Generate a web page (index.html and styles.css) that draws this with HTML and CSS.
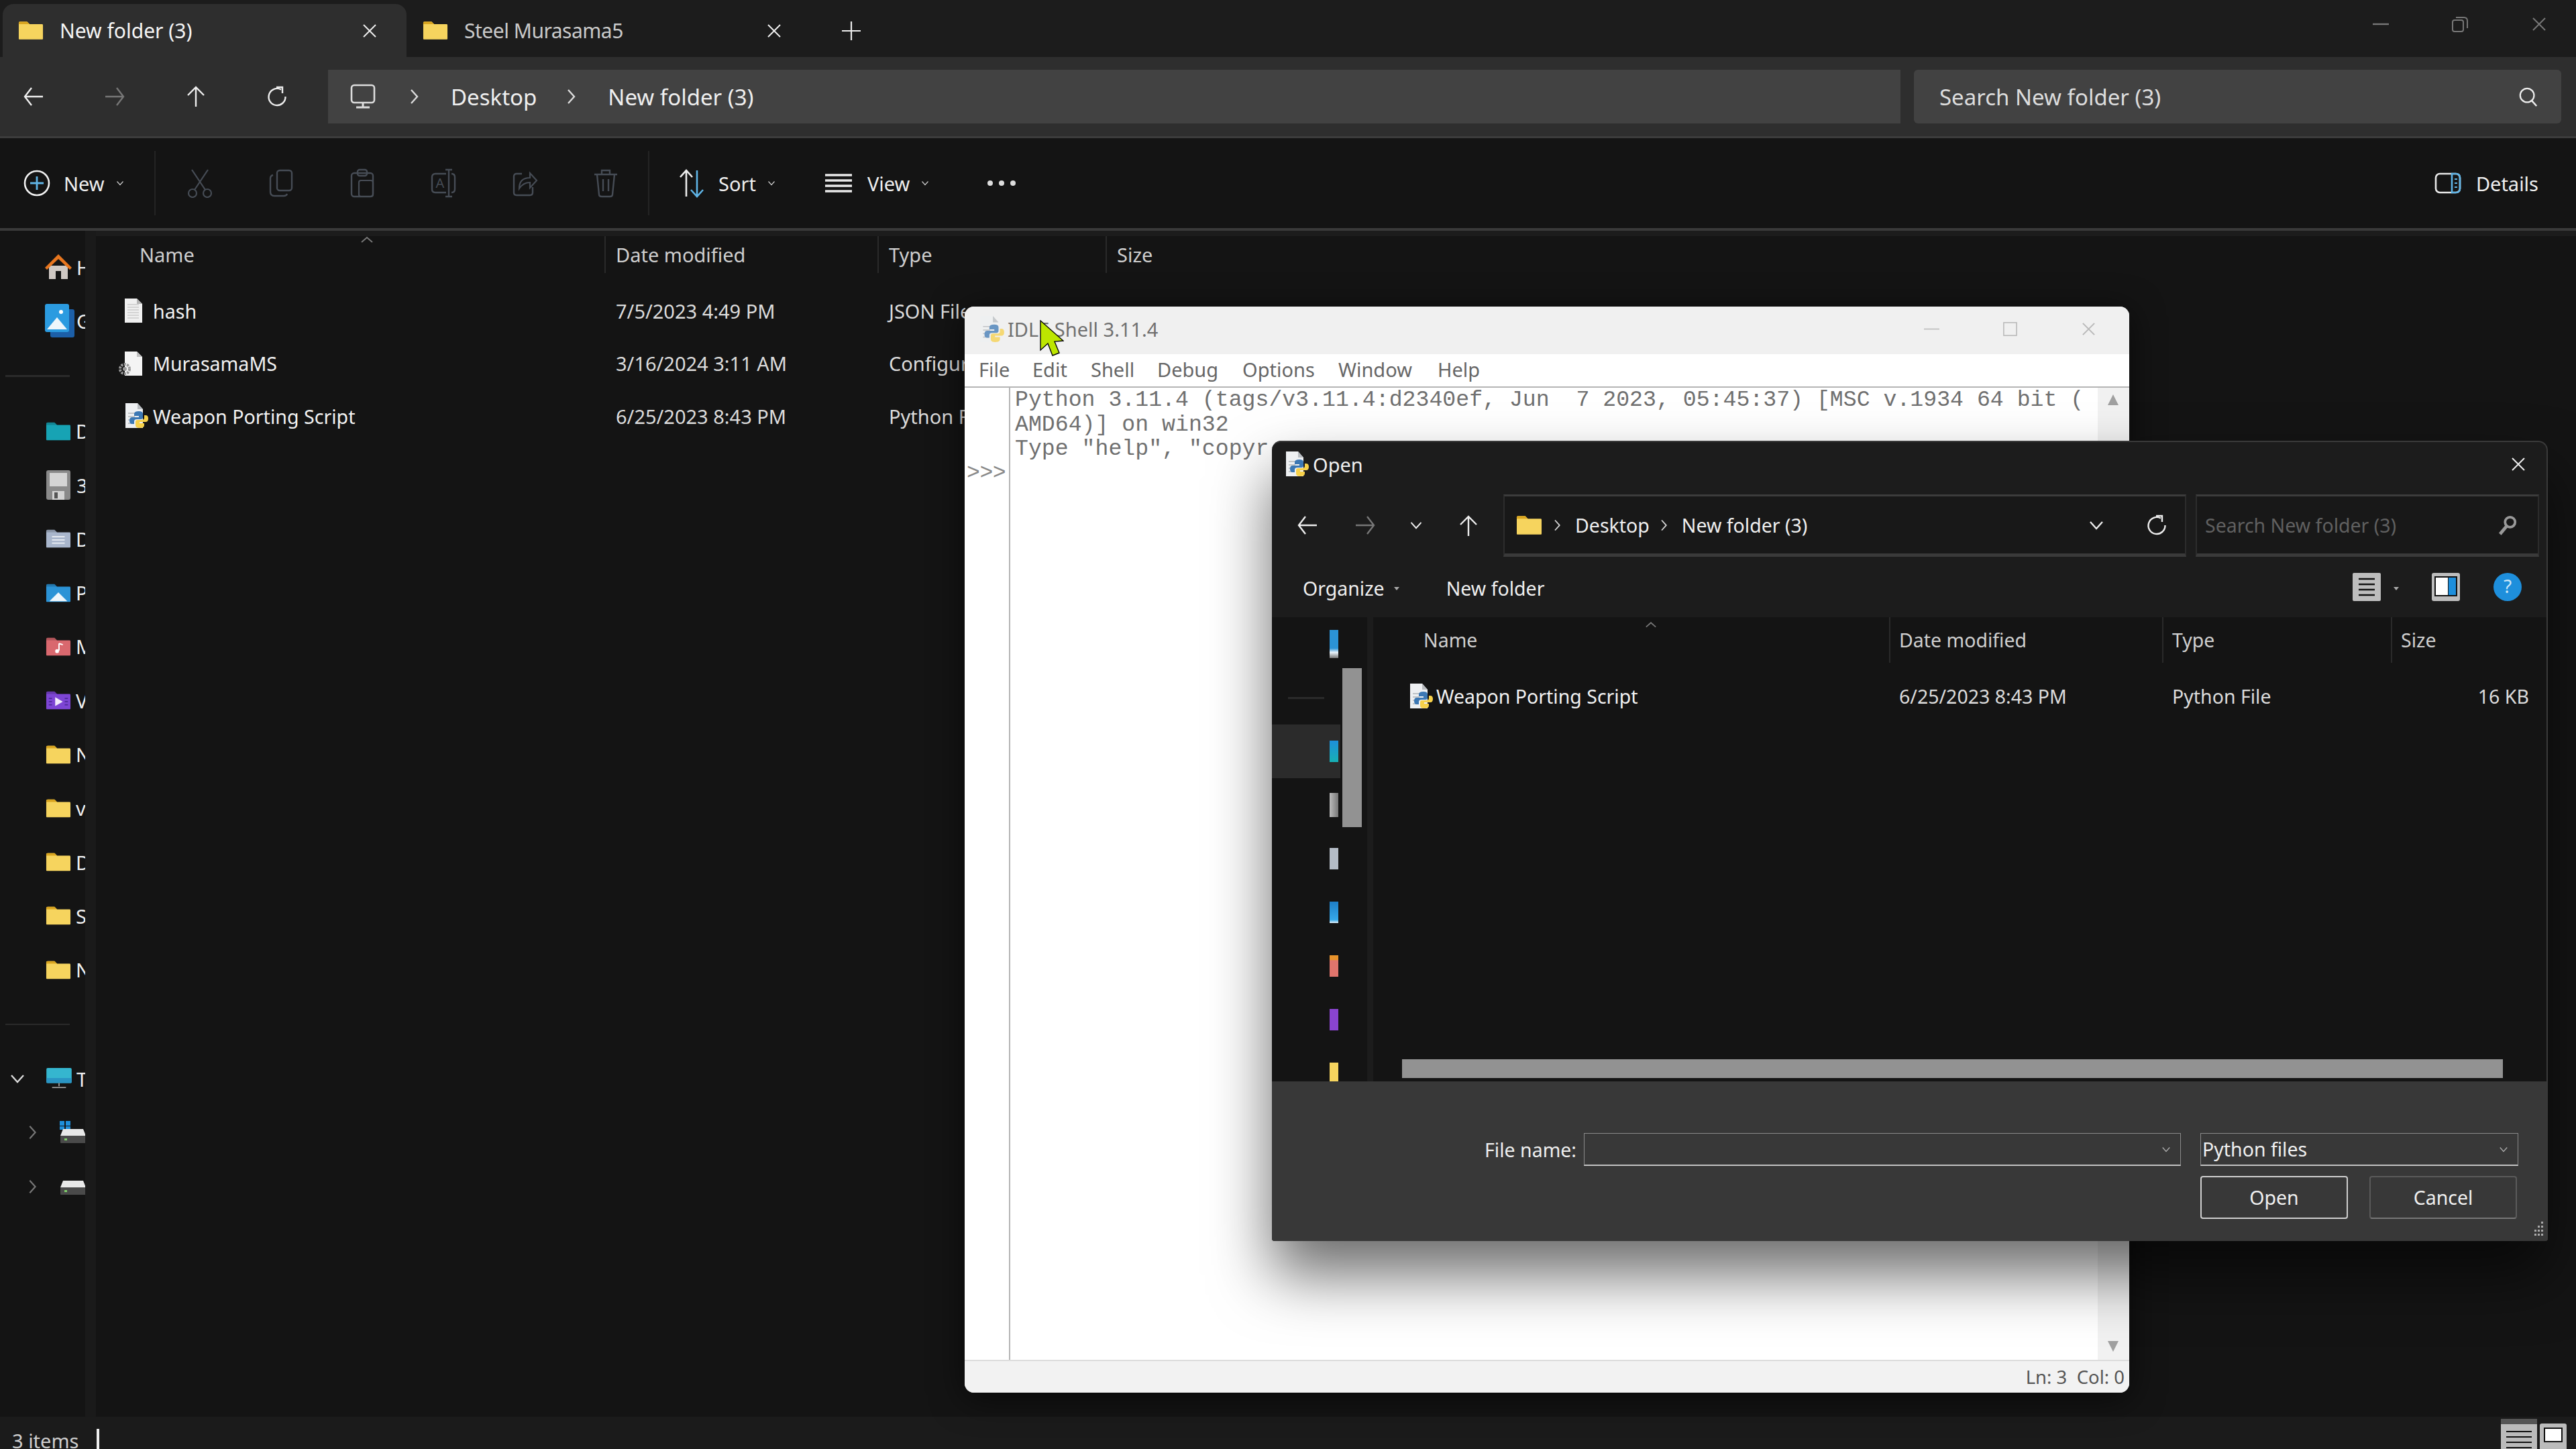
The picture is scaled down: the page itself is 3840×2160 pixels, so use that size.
FILE: index.html
```html
<!DOCTYPE html>
<html lang="en">
<head>
  <meta charset="UTF-8">
  <title>New folder (3) - File Explorer</title>
  <link rel="stylesheet" href="styles.css">
</head>
<body>
  <svg class="sprites" xmlns="http://www.w3.org/2000/svg">
    <symbol id="folder" viewBox="0 0 40 30"><path d="M1 3q0-2 2-2h11l4 4h20q1 0 1 2v21q0 1-1 1H2q-1 0-1-1z" fill="currentColor"/><path d="M1 3q0-2 2-2h11l4 4H1z" fill="#000" opacity=".18"/></symbol>
    <symbol id="folder-doc" viewBox="0 0 40 30"><use href="#folder"/><path d="M10 12h20M10 17h20M10 22h20" stroke="#eef1f5" stroke-width="2"/></symbol>
    <symbol id="folder-pic" viewBox="0 0 40 30"><use href="#folder"/><path d="M6 28l14-14 14 14z" fill="#eef6fb"/></symbol>
    <symbol id="folder-music" viewBox="0 0 40 30"><use href="#folder"/><path d="M21 10v11" stroke="#fff" stroke-width="2"/><path d="M21 10l6 2" stroke="#fff" stroke-width="2"/><circle cx="18" cy="22" r="3" fill="#fff"/></symbol>
    <symbol id="folder-video" viewBox="0 0 40 30"><use href="#folder"/><path d="M15 10l12 7-12 7z" fill="#f2ecfb"/><path d="M5 12h5M5 17h5M5 22h5M30 12h5M30 17h5M30 22h5" stroke="#4c2a96" stroke-width="2"/></symbol>
    <symbol id="yfolder" viewBox="0 0 40 30"><path d="M1 3q0-2 2-2h11l4 4h20q1 0 1 2v21q0 1-1 1H2q-1 0-1-1z" fill="#f6d45e"/><path d="M1 3q0-2 2-2h11l4 4H1z" fill="#d9a520"/></symbol>
    <symbol id="pyfile" viewBox="0 0 36 40"><path d="M2 1h18l8 9v28H2z" fill="#eef0f2"/><path d="M20 1v9h8z" fill="#b8bcc0"/><path d="M6 16h16M6 21h10M6 26h8M6 31h8" stroke="#b0b4b8" stroke-width="1.5"/><path d="M22 13q-7 0-7 4v3h7v2h-10q-4 0-4 5t4 5h3v-4q0-3 4-3h6q3 0 3-3v-5q0-4-6-4z" fill="#3c78b4"/><path d="M23 38q7 0 7-4v-3h-7v-2h9q4 0 4-5t-4-5h-2v4q0 3-4 3h-6q-3 0-3 3v5q0 4 6 4z" fill="#f7d14a"/></symbol>
    <symbol id="page" viewBox="0 0 28 38"><path d="M1 1h18l8 8v28H1z" fill="#f0f0f0"/><path d="M19 1v8h8z" fill="#b4b4b4"/><path d="M5 10h17M5 14h17M5 18h17M5 22h17M5 26h17M5 30h17" stroke="#b8b8b8" stroke-width="1"/></symbol>
    <symbol id="cfgfile" viewBox="0 0 36 38"><path d="M9 1h18l8 8v28H9z" fill="#f4f4f4"/><path d="M27 1v8h8z" fill="#c0c0c0"/><circle cx="9" cy="27" r="7" fill="none" stroke="#999" stroke-width="4" stroke-dasharray="3 1.5"/><circle cx="9" cy="27" r="3" fill="#999"/></symbol>
    <symbol id="arrow-left" viewBox="0 0 32 32"><path d="M30 16H3M13 3L3 16l10 13" fill="none" stroke="currentColor" stroke-width="2.4"/></symbol>
    <symbol id="arrow-right" viewBox="0 0 32 32"><path d="M2 16h27M19 3l10 13-10 13" fill="none" stroke="currentColor" stroke-width="2.4"/></symbol>
    <symbol id="arrow-up" viewBox="0 0 32 32"><path d="M16 31V3M4 14L16 2l12 12" fill="none" stroke="currentColor" stroke-width="2.4"/></symbol>
    <symbol id="refresh" viewBox="0 0 32 32"><path d="M22 5.5A12.5 12.5 0 1 0 28.5 16" fill="none" stroke="currentColor" stroke-width="2.4"/><path d="M15 2h9v9" fill="none" stroke="currentColor" stroke-width="2.4"/></symbol>
    <symbol id="chev-r" viewBox="0 0 16 24"><path d="M4 2l9 10-9 10" fill="none" stroke="currentColor" stroke-width="2.4"/></symbol>
    <symbol id="chev-d" viewBox="0 0 24 16"><path d="M3 3l9 10 9-10" fill="none" stroke="currentColor" stroke-width="2.4"/></symbol>
    <symbol id="close" viewBox="0 0 24 24"><path d="M3 3l18 18M21 3L3 21" fill="none" stroke="currentColor" stroke-width="2"/></symbol>
    <symbol id="search" viewBox="0 0 32 32"><circle cx="14" cy="14" r="11" fill="none" stroke="currentColor" stroke-width="2.4"/><path d="M21 22l8 9" stroke="currentColor" stroke-width="2.6"/></symbol>
    <symbol id="monitor" viewBox="0 0 38 38"><rect x="2" y="2" width="34" height="26" rx="4" fill="none" stroke="currentColor" stroke-width="2.6"/><path d="M19 28v6M9 35h20" stroke="currentColor" stroke-width="3"/></symbol>
    <symbol id="plus" viewBox="0 0 40 40"><circle cx="20" cy="20" r="18" fill="none" stroke="#f0f0f0" stroke-width="2.6"/><path d="M20 10v20M10 20h20" stroke="#5fb4e6" stroke-width="2.8"/></symbol>
    <symbol id="cut" viewBox="0 0 40 44"><path d="M8 2l20 30M32 2L12 32" stroke="currentColor" stroke-width="2.2" fill="none"/><circle cx="9" cy="37" r="6" fill="none" stroke="currentColor" stroke-width="2.2"/><circle cx="31" cy="37" r="6" fill="none" stroke="currentColor" stroke-width="2.2"/></symbol>
    <symbol id="copy" viewBox="0 0 40 44"><rect x="14" y="3" width="22" height="30" rx="4" fill="none" stroke="currentColor" stroke-width="2.4"/><path d="M8 10q-4 1-4 5v20q0 6 6 6h14q4 0 5-3" fill="none" stroke="currentColor" stroke-width="2.4"/></symbol>
    <symbol id="paste" viewBox="0 0 40 44"><rect x="4" y="7" width="32" height="35" rx="4" fill="none" stroke="currentColor" stroke-width="2.4"/><rect x="13" y="2" width="14" height="9" rx="3" fill="none" stroke="currentColor" stroke-width="2.4"/><rect x="15" y="18" width="21" height="24" rx="3" fill="none" stroke="currentColor" stroke-width="2.2"/></symbol>
    <symbol id="rename" viewBox="0 0 40 44"><path d="M24 8H8q-5 0-5 5v18q0 5 5 5h16M32 8q5 0 5 5v18q0 5-5 5" fill="none" stroke="currentColor" stroke-width="2.4"/><path d="M28 3v38M23 2h10M23 42h10" fill="none" stroke="currentColor" stroke-width="2.4"/></symbol>
    <symbol id="share" viewBox="0 0 40 44"><path d="M16 8H8q-4 0-4 4v24q0 4 4 4h20q4 0 4-4v-8" fill="none" stroke="currentColor" stroke-width="2.4"/><path d="M12 30q0-16 16-16V7l10 11-10 11v-8q-10 0-16 9z" fill="none" stroke="currentColor" stroke-width="2.2"/></symbol>
    <symbol id="trash" viewBox="0 0 40 44"><path d="M3 9h34M14 9V3h12v6M7 9l3 30q0 3 4 3h12q4 0 4-3l3-30M16 16v18M24 16v18" fill="none" stroke="currentColor" stroke-width="2.4"/></symbol>
    <symbol id="sort" viewBox="0 0 40 44"><path d="M12 42V3M3 13l9-10 9 10" fill="none" stroke="#eee" stroke-width="2.6"/><path d="M28 3v39M19 32l9 10 9-10" fill="none" stroke="#5fb4e6" stroke-width="2.6"/></symbol>
    <symbol id="lines" viewBox="0 0 40 30"><path d="M0 3h40M0 11h40M0 19h40M0 27h40" stroke="#e8e8e8" stroke-width="3.6"/></symbol>
    <symbol id="details" viewBox="0 0 40 32"><rect x="2" y="2" width="36" height="28" rx="6" fill="none" stroke="#e8e8e8" stroke-width="2.6"/><path d="M26 2h6q6 0 6 6v16q0 6-6 6h-6z" fill="none" stroke="#5fb4e6" stroke-width="2.6"/><path d="M30 10h4M30 16h4M30 22h4" stroke="#5fb4e6" stroke-width="2.2"/></symbol>
    <symbol id="listview" viewBox="0 0 42 42"><rect width="42" height="42" rx="2" fill="#bdbdbd"/><path d="M9 9h24M9 17h24M9 25h24M9 33h24" stroke="#111" stroke-width="2.4"/></symbol>
    <symbol id="paneview" viewBox="0 0 42 42"><rect width="42" height="42" rx="3" fill="#bdbdbd"/><rect x="4" y="5" width="34" height="30" fill="#111"/><rect x="6" y="7" width="18" height="26" fill="#fff"/><rect x="25" y="7" width="11" height="26" fill="#1e8fdc"/></symbol>
    <symbol id="home" viewBox="0 0 40 40"><path d="M6 18h28v20H24V26h-8v12H6z" fill="#cfc9c4"/><path d="M0 21L20 1l20 20-3 3L20 8 3 24z" fill="#e8761e"/></symbol>
    <symbol id="gallery" viewBox="0 0 44 50"><rect x="8" y="8" width="36" height="42" rx="3" fill="#1c5fa8"/><rect width="36" height="42" rx="3" fill="#2b9be0"/><path d="M3 38l15-18 15 18z" fill="#eef6fb"/><circle cx="24" cy="12" r="3" fill="#fff"/></symbol>
    <symbol id="floppy" viewBox="0 0 36 44"><rect width="36" height="44" rx="3" fill="#8a8a8a"/><rect x="5" y="4" width="26" height="20" fill="#d4d4d4"/><rect x="9" y="31" width="18" height="13" fill="#d4d4d4"/><rect x="12" y="33" width="5" height="9" fill="#555"/></symbol>
    <symbol id="pc" viewBox="0 0 40 34"><rect width="40" height="24" rx="2" fill="#35b6cf"/><path d="M0 16h40v6q0 2-2 2H2q-2 0-2-2z" fill="#2a95c4"/><path d="M20 24v5M9 31h22" stroke="#999" stroke-width="2"/></symbol>
    <symbol id="drive" viewBox="0 0 40 26"><path d="M5 4h30l4 10H1z" fill="#e8e8e8"/><rect x="1" y="14" width="38" height="11" rx="1" fill="#4a4a4a"/><rect x="7" y="18" width="4" height="3" fill="#7ecf6a"/></symbol>
    <symbol id="windrive" viewBox="0 0 40 34"><rect x="0" y="0" width="7" height="7" fill="#1e8fdc"/><rect x="9" y="0" width="7" height="7" fill="#1e8fdc"/><rect x="0" y="8" width="7" height="5" fill="#1e8fdc"/><rect x="9" y="8" width="7" height="5" fill="#1e8fdc"/><path d="M5 12h30l4 10H1z" fill="#e8e8e8"/><rect x="1" y="22" width="38" height="11" rx="1" fill="#4a4a4a"/><rect x="7" y="26" width="4" height="3" fill="#7ecf6a"/></symbol>
  </svg>

  <div class="explorer">
    <div class="tabbar">
      <div class="tab active">
        <svg class="tab-folder"><use href="#yfolder"/></svg>
        <span>New folder (3)</span>
        <svg class="tab-close"><use href="#close"/></svg>
      </div>
      <div class="tab">
        <svg class="tab-folder"><use href="#yfolder"/></svg>
        <span>Steel Murasama5</span>
        <svg class="tab-close"><use href="#close"/></svg>
      </div>
      <svg class="tab-add" viewBox="0 0 28 28"><path d="M14 0v28M0 14h28" stroke="#eee" stroke-width="2.2"/></svg>
      <div class="win-controls">
        <svg viewBox="0 0 24 24"><path d="M0 12h24" stroke="currentColor" stroke-width="2.4"/></svg>
        <svg viewBox="0 0 24 24"><rect x="1" y="6" width="16" height="17" rx="3" fill="none" stroke="currentColor" stroke-width="2"/><path d="M6 2h12q5 0 5 5v11" fill="none" stroke="currentColor" stroke-width="2"/></svg>
        <svg viewBox="0 0 24 24"><use href="#close"/></svg>
      </div>
    </div>

    <div class="addressbar">
      <svg class="nav-btn"><use href="#arrow-left"/></svg>
      <svg class="nav-btn dim"><use href="#arrow-right"/></svg>
      <svg class="nav-btn"><use href="#arrow-up"/></svg>
      <svg class="nav-btn"><use href="#refresh"/></svg>
      <div class="addr-box">
        <svg class="addr-pc"><use href="#monitor"/></svg>
        <svg class="addr-chev"><use href="#chev-r"/></svg>
        <span>Desktop</span>
        <svg class="addr-chev"><use href="#chev-r"/></svg>
        <span>New folder (3)</span>
      </div>
      <div class="search-box">
        <span>Search New folder (3)</span>
        <svg><use href="#search"/></svg>
      </div>
    </div>

    <div class="commandbar">
      <div class="cmd-new">
        <svg class="cmd-ico"><use href="#plus"/></svg>
        <span>New</span>
        <svg class="cmd-caret"><use href="#chev-d"/></svg>
      </div>
      <div class="cmd-sep"></div>
      <div class="cmd-tools">
        <svg><use href="#cut"/></svg>
        <svg><use href="#copy"/></svg>
        <svg><use href="#paste"/></svg>
        <svg viewBox="0 0 40 44"><use href="#rename"/><text x="15" y="29" text-anchor="middle" class="rename-mark">A</text></svg>
        <svg><use href="#share"/></svg>
        <svg><use href="#trash"/></svg>
      </div>
      <div class="cmd-sep second"></div>
      <div class="cmd-group sort">
        <svg class="cmd-ico"><use href="#sort"/></svg>
        <span>Sort</span>
        <svg class="cmd-caret"><use href="#chev-d"/></svg>
      </div>
      <div class="cmd-group view">
        <svg class="cmd-ico"><use href="#lines"/></svg>
        <span>View</span>
        <svg class="cmd-caret"><use href="#chev-d"/></svg>
      </div>
      <div class="cmd-more"><i></i><i></i><i></i></div>
      <div class="cmd-group details">
        <svg class="cmd-ico"><use href="#details"/></svg>
        <span>Details</span>
      </div>
    </div>

    <div class="main">
      <div class="sidebar">
        <div class="side-row"><svg class="home"><use href="#home"/></svg><span>Home</span></div>
        <div class="side-row"><svg class="gallery"><use href="#gallery"/></svg><span>Gallery</span></div>
        <div class="side-sep"></div>
        <div class="side-row"><svg class="sf teal"><use href="#folder"/></svg><span>Desktop</span></div>
        <div class="side-row"><svg class="floppy"><use href="#floppy"/></svg><span>3</span></div>
        <div class="side-row"><svg class="sf slate"><use href="#folder-doc"/></svg><span>Documents</span></div>
        <div class="side-row"><svg class="sf sky"><use href="#folder-pic"/></svg><span>Pictures</span></div>
        <div class="side-row"><svg class="sf rose"><use href="#folder-music"/></svg><span>Music</span></div>
        <div class="side-row"><svg class="sf violet"><use href="#folder-video"/></svg><span>Videos</span></div>
        <div class="side-row"><svg class="sf"><use href="#yfolder"/></svg><span>N</span></div>
        <div class="side-row"><svg class="sf"><use href="#yfolder"/></svg><span>v</span></div>
        <div class="side-row"><svg class="sf"><use href="#yfolder"/></svg><span>D</span></div>
        <div class="side-row"><svg class="sf"><use href="#yfolder"/></svg><span>S</span></div>
        <div class="side-row"><svg class="sf"><use href="#yfolder"/></svg><span>N</span></div>
        <div class="side-sep thin"></div>
        <div class="side-row tree">
          <svg class="tree-open"><use href="#chev-d"/></svg>
          <svg class="pc"><use href="#pc"/></svg><span>This PC</span>
        </div>
        <div class="side-row sub">
          <svg class="tree-closed"><use href="#chev-r"/></svg>
          <svg class="drv win"><use href="#windrive"/></svg>
        </div>
        <div class="side-row sub">
          <svg class="tree-closed"><use href="#chev-r"/></svg>
          <svg class="drv"><use href="#drive"/></svg>
        </div>
      </div>
      <div class="splitter"></div>
      <div class="files">
        <div class="files-head">
          <div class="col name"><span>Name</span><svg class="sort-caret" viewBox="0 0 20 10"><path d="M2 9l8-7 8 7" fill="none" stroke="#777" stroke-width="2"/></svg></div>
          <div class="col">Date modified</div>
          <div class="col">Type</div>
          <div class="col">Size</div>
        </div>
        <div class="file-row">
          <div class="file-name"><svg class="ico-page"><use href="#page"/></svg><span>hash</span></div>
          <div class="file-cell">7/5/2023 4:49 PM</div>
          <div class="file-cell file-type">JSON File</div>
        </div>
        <div class="file-row">
          <div class="file-name"><svg class="ico-cfg"><use href="#cfgfile"/></svg><span>MurasamaMS</span></div>
          <div class="file-cell">3/16/2024 3:11 AM</div>
          <div class="file-cell file-type">Configur</div>
        </div>
        <div class="file-row">
          <div class="file-name"><svg class="ico-py"><use href="#pyfile"/></svg><span>Weapon Porting Script</span></div>
          <div class="file-cell">6/25/2023 8:43 PM</div>
          <div class="file-cell file-type">Python File</div>
        </div>
      </div>
    </div>

    <div class="statusbar">
      <span>3 items</span>
      <i class="status-bar-tick"></i>
      <div class="status-views">
        <div class="status-list"><i></i><i></i><i></i><i></i></div>
        <div class="status-pane"><b></b></div>
      </div>
    </div>
  </div>

  <!-- IDLE shell window -->
  <div class="idle">
    <div class="idle-title">
      <svg class="idle-ico"><use href="#pyfile"/></svg>
      <span>IDLE Shell 3.11.4</span>
      <div class="idle-controls">
        <svg viewBox="0 0 24 24"><path d="M0 12h24" stroke="currentColor" stroke-width="1.6"/></svg>
        <svg viewBox="0 0 24 24"><rect x="2" y="2" width="20" height="20" fill="none" stroke="currentColor" stroke-width="1.6"/></svg>
        <svg viewBox="0 0 24 24"><use href="#close"/></svg>
      </div>
    </div>
    <div class="idle-menu">
      <span>File</span><span>Edit</span><span>Shell</span><span>Debug</span><span>Options</span><span>Window</span><span>Help</span>
    </div>
    <div class="idle-body">
      <div class="idle-gutter">&gt;&gt;&gt;</div>
      <div class="idle-text">
        <div>Python 3.11.4 (tags/v3.11.4:d2340ef, Jun  7 2023, 05:45:37) [MSC v.1934 64 bit (</div>
        <div>AMD64)] on win32</div>
        <div>Type "help", "copyr</div>
      </div>
      <div class="idle-scroll">
        <svg viewBox="0 0 20 20"><path d="M10 2l8 16H2z"/></svg>
        <svg viewBox="0 0 20 20"><path d="M10 18l8-16H2z"/></svg>
      </div>
    </div>
    <div class="idle-status">Ln: 3&nbsp; Col: 0</div>
  </div>

  <!-- Open file dialog -->
  <div class="dialog">
    <div class="dlg-title">
      <svg class="dlg-ico"><use href="#pyfile"/></svg>
      <span>Open</span>
      <svg class="dlg-close"><use href="#close"/></svg>
    </div>
    <div class="dlg-nav">
      <svg class="dlg-btn"><use href="#arrow-left"/></svg>
      <svg class="dlg-btn dim"><use href="#arrow-right"/></svg>
      <svg class="dlg-recent"><use href="#chev-d"/></svg>
      <svg class="dlg-btn up"><use href="#arrow-up"/></svg>
      <div class="dlg-addr">
        <svg class="dlg-folder"><use href="#yfolder"/></svg>
        <svg class="dlg-chev"><use href="#chev-r"/></svg>
        <span>Desktop</span>
        <svg class="dlg-chev"><use href="#chev-r"/></svg>
        <span>New folder (3)</span>
        <svg class="dlg-drop"><use href="#chev-d"/></svg>
        <svg class="dlg-refresh"><use href="#refresh"/></svg>
      </div>
      <div class="dlg-search">
        <span>Search New folder (3)</span>
        <svg viewBox="0 0 32 32"><circle cx="20" cy="11" r="8" fill="none" stroke="#999" stroke-width="4"/><path d="M14 18L4 30" stroke="#999" stroke-width="5"/></svg>
      </div>
    </div>
    <div class="dlg-tools">
      <span class="organize">Organize</span>
      <i class="tiny-caret"></i>
      <span class="newfolder">New folder</span>
      <svg class="view-ico"><use href="#listview"/></svg>
      <i class="tiny-caret"></i>
      <svg class="view-ico pane"><use href="#paneview"/></svg>
      <svg class="help" viewBox="0 0 42 42"><circle cx="21" cy="21" r="21" fill="#1e8fdc"/><text x="21" y="30" text-anchor="middle" class="help-mark">?</text></svg>
    </div>
    <div class="dlg-body">
      <div class="dlg-side">
        <div class="dlg-side-row"><i class="strip pic"></i></div>
        <div class="dlg-side-row"><i class="side-dash"></i></div>
        <div class="dlg-side-row selected"><i class="strip desk"></i></div>
        <div class="dlg-side-row"><i class="strip disk"></i></div>
        <div class="dlg-side-row"><i class="strip docs"></i></div>
        <div class="dlg-side-row"><i class="strip sky"></i></div>
        <div class="dlg-side-row"><i class="strip music"></i></div>
        <div class="dlg-side-row"><i class="strip video"></i></div>
        <div class="dlg-side-row"><i class="strip gold"></i></div>
      </div>
      <div class="dlg-vscroll"><div class="dlg-thumb"></div></div>
      <div class="dlg-split"></div>
      <div class="dlg-files">
        <div class="dlg-head">
          <div class="col name"><span>Name</span><svg class="dlg-caret" viewBox="0 0 20 10"><path d="M2 9l8-7 8 7" fill="none" stroke="#777" stroke-width="2"/></svg></div>
          <div class="col">Date modified</div>
          <div class="col">Type</div>
          <div class="col">Size</div>
        </div>
        <div class="dlg-row">
          <div class="dlg-file"><svg class="dlg-py"><use href="#pyfile"/></svg><span>Weapon Porting Script</span></div>
          <div>6/25/2023 8:43 PM</div>
          <div>Python File</div>
          <div class="dlg-size">16 KB</div>
        </div>
        <div class="dlg-hscroll"></div>
      </div>
    </div>
    <div class="dlg-foot">
      <label class="foot-label">File name:</label>
      <div class="combo"><svg><use href="#chev-d"/></svg></div>
      <div class="combo type"><span>Python files</span><svg><use href="#chev-d"/></svg></div>
      <div class="foot-actions">
        <div class="btn primary">Open</div>
        <div class="btn">Cancel</div>
      </div>
      <svg class="grip" viewBox="0 0 16 22"><path d="M12 1h3v3h-3zM7 7h3v3H7zM12 7h3v3h-3zM2 13h3v3H2zM7 13h3v3H7zM12 13h3v3h-3zM2 19h3v3H2zM7 19h3v3H7zM12 19h3v3h-3z" fill="#aaa"/></svg>
    </div>
  </div>

  <svg class="cursor" viewBox="0 0 36 54"><path d="M1 1v44l11-10 7 18 10-4-7-17 13-1z" fill="#bde600" stroke="#0a0a0a" stroke-width="1.4"/></svg>
</body>
</html>
```

FILE: styles.css
```css
html, body {
  margin: 0;
  width: 3840px;
  height: 2160px;
  overflow: hidden;
  background-color: #141414;
}
body {
  position: relative;
  font-family: "Noto Sans", "Open Sans", sans-serif;
  font-size: 29px;
  color: #efefef;
}
svg { display: block; flex: none; }
.sprites { display: none; }

.explorer {
  display: flex;
  flex-direction: column;
  height: 2160px;
}

/* tabs */
.tabbar {
  height: 79px;
  padding-top: 6px;
  display: flex;
  align-items: stretch;
  background-color: #1c1c1c;
}
.tab {
  width: 603px;
  display: flex;
  align-items: center;
  padding: 0 43px 0 24px;
  box-sizing: border-box;
  font-size: 30px;
  letter-spacing: -0.5px;
  color: #c9c9c9;
}
.tab.active {
  width: 602px;
  margin-left: 4px;
  padding-left: 23px;
  background-color: #2e2e2e;
  border-radius: 16px 16px 0 0;
  letter-spacing: 0;
  color: #f4f4f4;
}
.tab-folder { width: 38px; height: 29px; margin-right: 24px; }
.tab-close { width: 24px; height: 24px; margin-left: auto; color: #eee; }
.tab-add { width: 28px; height: 28px; align-self: center; margin-left: 46px; border: 0; }
.win-controls {
  margin: 18px 43px 0 auto;
  display: flex;
  gap: 94px;
  color: #777;
}
.win-controls svg { width: 24px; height: 24px; }

/* address row */
.addressbar {
  height: 118px;
  padding-left: 34px;
  border-bottom: 3px solid #3c3c3c;
  display: flex;
  align-items: center;
  background-color: #2e2e2e;
  color: #efefef;
}
.nav-btn { width: 32px; height: 32px; margin-right: 89px; color: #eee; }
.nav-btn:nth-child(4) { margin-right: 60px; }
.nav-btn.dim { color: #777; }
.addr-box {
  width: 2344px;
  height: 80px;
  padding-left: 33px;
  box-sizing: border-box;
  display: flex;
  align-items: center;
  background-color: #424242;
  font-size: 33px;
}
.addr-pc { width: 38px; height: 38px; margin-right: 49px; color: #ddd; }
.addr-chev { width: 16px; height: 24px; color: #ddd; }
.addr-box span { margin: 0 43px 0 47px; }
.addr-box span:last-child { margin-right: 0; }
.search-box {
  width: 965px;
  height: 80px;
  margin-left: 20px;
  padding: 0 34px 0 38px;
  box-sizing: border-box;
  display: flex;
  align-items: center;
  justify-content: space-between;
  background-color: #424242;
  border-radius: 6px;
  font-size: 33px;
  color: #ddd;
}
.search-box svg { width: 30px; height: 30px; color: #eee; }

/* command row */
.commandbar {
  height: 134px;
  border-bottom: 4px solid #3a3a3a;
  display: flex;
  align-items: center;
  background-color: #141414;
}
.cmd-new {
  width: 230px;
  padding-left: 35px;
  box-sizing: border-box;
  display: flex;
  align-items: center;
}
.cmd-ico { width: 40px; height: 44px; margin-right: 20px; }
.cmd-caret { width: 12px; height: 8px; margin-left: 17px; color: #ccc; }
.cmd-sep { width: 2px; height: 96px; background-color: #242424; }
.cmd-sep.second { margin-left: 3px; }
.cmd-tools { display: flex; margin-left: 5px; color: #464c55; }
.cmd-tools svg { width: 40px; height: 44px; margin: 0 40px 0 41px; }
.rename-mark { fill: #464c55; font-size: 20px; font-family: "Noto Sans", sans-serif; }
.cmd-group { display: flex; align-items: center; }
.sort { margin-left: 43px; }
.view { margin-left: 74px; }
.view .cmd-ico { height: 30px; }
.view .cmd-ico + span { margin-left: 3px; }
.cmd-more { display: flex; gap: 9px; margin-left: 87px; }
.cmd-more i { width: 8px; height: 8px; border-radius: 50%; background-color: #ddd; }
.details { margin-left: auto; padding-right: 56px; }
.details .cmd-ico { height: 32px; margin-right: 22px; }

/* main explorer area */
.main { flex: 1; display: flex; min-height: 0; }
.sidebar {
  width: 127px;
  padding-top: 14px;
  box-sizing: border-box;
  overflow: hidden;
}
.side-row {
  height: 80.3px;
  padding-left: 67px;
  box-sizing: border-box;
  display: flex;
  align-items: center;
  white-space: nowrap;
  font-size: 29px;
}
.side-row span { margin-left: 7px; }
.side-sep { height: 84px; display: flex; align-items: center; }
.side-sep::before { content: ""; width: 96px; margin-left: 8px; height: 3px; background-color: #2a2a2a; }
.side-sep.thin { height: 82px; }
.side-sep.thin::before { height: 2px; }
.home { width: 40px; height: 40px; }
.gallery { width: 44px; height: 50px; margin-right: -4px; }
.sf { width: 38px; height: 30px; margin-left: 1px; color: #f6d45e; }
.sf.teal { color: #17a3b4; }
.sf.slate { color: #a9b6cc; }
.sf.sky { color: #2b93d6; }
.sf.rose { color: #d9686e; }
.sf.violet { color: #7d45d4; }
.floppy { width: 36px; height: 44px; margin-left: 2px; margin-right: 2px; }
.pc { width: 38px; height: 32px; margin-left: 1px; }
.side-row.tree { padding-left: 14px; }
.tree-open { width: 24px; height: 16px; margin-right: 30px; color: #ddd; }
.side-row.sub { padding-left: 40px; }
.tree-closed { width: 16px; height: 22px; margin-right: 33px; color: #777; }
.drv { width: 40px; height: 26px; }
.drv.win { height: 34px; }
.splitter { width: 16px; background-color: #1a1a1a; }

.files { flex: 1; min-width: 0; }
.files-head, .file-row {
  display: grid;
  grid-template-columns: 758px 407px 340px 228px;
}
.files-head {
  height: 55px;
  border-top: 8px solid #1c1c1c;
  margin-bottom: 17px;
  color: #cfcfcf;
}
.col {
  display: flex;
  align-items: center;
  padding-left: 15px;
  border-left: 2px solid #2a2a2a;
}
.col.name { border-left: 0; padding-left: 65px; }
.sort-caret { width: 20px; height: 10px; align-self: flex-start; margin: 0 344px 0 auto; }
.file-row { height: 78.5px; align-items: center; color: #dcdcdc; }
.file-name { display: flex; align-items: center; padding-left: 42px; font-size: 28.6px; color: #f2f2f2; white-space: nowrap; }
.file-cell { padding-left: 17px; white-space: nowrap; }
.file-type { width: 114px; overflow: hidden; }
.ico-page { width: 28px; height: 38px; margin-right: 15px; }
.ico-cfg { width: 36px; height: 38px; margin: 0 15px 0 -8px; }
.ico-py { width: 36px; height: 40px; margin-right: 7px; }

.statusbar {
  height: 48px;
  flex: none;
  display: flex;
  align-items: flex-end;
  background-color: #1b1b1b;
  color: #cfcfcf;
  overflow: hidden;
}
.statusbar > span { margin: 0 0 -8px 18px; font-size: 29px; line-height: 40px; }
.status-bar-tick { width: 4px; height: 30px; margin-left: 27px; background-color: #eee; }
.status-views { margin-left: auto; margin-right: 14px; display: flex; gap: 4px; align-items: flex-end; height: 45px; }
.status-list {
  width: 54px;
  height: 45px;
  box-sizing: border-box;
  padding: 10px 8px 0;
  border-top: 8px solid #555;
  background-color: #bbb;
}
.status-list i { display: block; height: 2px; margin-bottom: 6px; background-color: #111; }
.status-pane {
  width: 40px;
  height: 38px;
  box-sizing: border-box;
  padding: 6px 6px 0;
  background-color: #bbb;
  border-radius: 3px 3px 0 0;
}
.status-pane b { display: block; height: 22px; background-color: #fff; border: 2px solid #111; box-sizing: border-box; }

/* IDLE window, floats over the explorer */
.idle {
  position: absolute;
  left: 1438px;
  top: 457px;
  width: 1736px;
  height: 1619px;
  display: flex;
  flex-direction: column;
  background-color: #fff;
  border-radius: 14px;
  box-shadow: 0 8px 50px rgba(0, 0, 0, 0.6);
  overflow: hidden;
  color: #666;
}
.idle-title {
  height: 67px;
  padding-bottom: 4px;
  flex: none;
  display: flex;
  align-items: center;
  padding-left: 21px;
  background-color: #f0f0f0;
  color: #707070;
}
.idle-ico { width: 38px; height: 42px; margin-right: 5px; opacity: 0.75; }
.idle-controls {
  margin: 0 49px 0 auto;
  display: flex;
  gap: 94px;
  color: #b8b8b8;
}
.idle-controls svg { width: 23px; height: 23px; }
.idle-menu {
  height: 45px;
  padding-bottom: 3px;
  flex: none;
  display: flex;
  align-items: center;
  padding-left: 21px;
  font-size: 29px;
  color: #666;
}
.idle-menu span:nth-child(1) { width: 80px; }
.idle-menu span:nth-child(2) { width: 87px; }
.idle-menu span:nth-child(3) { width: 99px; }
.idle-menu span:nth-child(4) { width: 127px; }
.idle-menu span:nth-child(5) { width: 143px; }
.idle-menu span:nth-child(6) { width: 148px; }
.idle-body { flex: 1; display: flex; min-height: 0; border-top: 2px solid #b5b5b5; border-bottom: 2px solid #dcdcdc; }
.idle-gutter {
  width: 68px;
  flex: none;
  padding: 109px 0 0 3px;
  box-sizing: border-box;
  border-right: 2px solid #b5b5b5;
  font-family: "Liberation Mono", monospace;
  font-size: 33.2px;
  line-height: 36.7px;
  letter-spacing: -0.5px;
  color: #888;
}
.idle-text {
  flex: 1;
  min-width: 0;
  padding-left: 7px;
  overflow: hidden;
  font-family: "Liberation Mono", monospace;
  font-size: 33.2px;
  line-height: 36.7px;
  color: #707070;
}
.idle-text div { width: fit-content; white-space: pre; }
.idle-scroll {
  width: 47px;
  flex: none;
  box-sizing: border-box;
  padding: 8px 13px 10px;
  display: flex;
  flex-direction: column;
  justify-content: space-between;
  background-color: #f1f1f1;
  fill: #a0a0a0;
}
.idle-scroll svg { width: 20px; height: 20px; }
.idle-status {
  height: 47px;
  flex: none;
  display: flex;
  align-items: center;
  justify-content: flex-end;
  padding-right: 7px;
  font-size: 27.5px;
  color: #555;
  background-color: #f2f2f2;
}

/* Open dialog */
.dialog {
  position: absolute;
  left: 1896px;
  top: 657px;
  width: 1902px;
  height: 1193px;
  display: flex;
  flex-direction: column;
  background-color: #1c1c1c;
  border-radius: 14px 14px 4px 4px;
  box-shadow: 0 50px 90px rgba(0, 0, 0, 0.58);
  overflow: hidden;
}
.dialog::after {
  content: "";
  position: absolute;
  inset: 0;
  border: 2px solid #3a3a3a;
  border-bottom: 0;
  border-left: 0;
  border-radius: 14px 14px 0 0;
  pointer-events: none;
}
.dlg-title {
  height: 70px;
  padding-bottom: 10px;
  flex: none;
  display: flex;
  align-items: center;
  padding-left: 19px;
}
.dlg-ico { width: 36px; height: 40px; margin-right: 6px; }
.dlg-close { width: 24px; height: 24px; margin: 0 32px 0 auto; color: #eee; }
.dlg-nav {
  height: 93px;
  flex: none;
  display: flex;
  align-items: stretch;
  padding-left: 20px;
  box-sizing: border-box;
}
.dlg-btn { width: 32px; height: 32px; margin: 30px 17px 0 17px; color: #eee; }
.dlg-btn.dim { margin-left: 37px; color: #777; }
.dlg-recent { width: 20px; height: 14px; margin: 39px 0 0 33px; color: #eee; }
.dlg-btn.up { margin-left: 52px; margin-right: 36px; height: 34px; }
.dlg-addr, .dlg-search {
  box-sizing: border-box;
  display: flex;
  align-items: center;
  background-color: #181818;
  border-top: 3px solid #3c3c3c;
  border-bottom: 5px solid #3a3a3a;
  border-left: 2px solid #2c2c2c;
  border-right: 2px solid #2c2c2c;
  font-size: 28.5px;
}
.dlg-addr { width: 1018px; padding-left: 17px; }
.dlg-folder { width: 39px; height: 30px; }
.dlg-chev { width: 12px; height: 18px; margin: 0 21px 0 16px; color: #ddd; }
.dlg-addr span:nth-of-type(1) { margin-right: -1px; }
.dlg-drop { width: 24px; height: 16px; margin-left: auto; color: #eee; }
.dlg-refresh { width: 32px; height: 32px; margin: 0 26px 0 62px; color: #eee; }
.dlg-search {
  width: 512px;
  margin-left: 14px;
  padding: 0 30px 0 12px;
  justify-content: space-between;
  color: #606060;
}
.dlg-search svg { width: 30px; height: 30px; }
.dlg-tools {
  height: 86px;
  padding-top: 4px;
  flex: none;
  display: flex;
  align-items: center;
  padding-left: 46px;
  font-size: 28.5px;
}
.tiny-caret {
  width: 0;
  height: 0;
  margin-left: 14px;
  border: 4px solid transparent;
  border-top: 5px solid #aaa;
  border-bottom: 0;
}
.newfolder { margin: 0 auto 0 70px; }
.view-ico { width: 42px; height: 42px; margin-top: -4px; }
.view-ico:not(.pane) { margin-right: 5px; }
.view-ico.pane { margin-left: 49px; }
.help { width: 42px; height: 42px; margin: -4px 39px 0 50px; }
.help-mark { fill: #cfe8f8; font-size: 28px; font-family: "Noto Sans", sans-serif; }

.dlg-body { height: 692px; flex: none; display: flex; background-color: #141414; overflow: hidden; }
.dlg-side { width: 102px; flex: none; }
.dlg-side-row {
  height: 80px;
  display: flex;
  align-items: center;
  justify-content: flex-end;
  padding-right: 3px;
  box-sizing: border-box;
}
.dlg-side-row.selected { background-color: #2b2b2b; }
.strip { display: block; width: 13px; height: 32px; }
.strip.pic { height: 42px; background: linear-gradient(#2b93d6 65%, #eaf4fb 80%, #777); }
.strip.desk { background: linear-gradient(#1e8fdc, #17b0b4); }
.strip.disk { height: 36px; background: linear-gradient(90deg, #bbb, #777); }
.strip.docs { background: #b4bcc6; }
.strip.sky { background: linear-gradient(#1e7fc8, #35a8e8 85%, #eaf4fb); }
.strip.music { background: linear-gradient(#e8932c 20%, #e0746c 25%); }
.strip.video { background: #8a44d0; }
.strip.gold { background: #f6d45e; }
.side-dash { display: block; width: 54px; height: 3px; margin-right: 21px; background-color: #2a2a2a; }
.dlg-vscroll { width: 40px; flex: none; padding-left: 3px; box-sizing: border-box; }
.dlg-thumb { width: 29px; height: 237px; margin-top: 76px; background-color: #929292; }
.dlg-split { width: 9px; flex: none; background-color: #1c1c1c; }
.dlg-files { flex: 1; min-width: 0; display: flex; flex-direction: column; }
.dlg-head, .dlg-row {
  display: grid;
  grid-template-columns: 769px 407px 341px 226px;
  flex: none;
}
.dlg-head { height: 68px; margin-bottom: 12px; color: #cfcfcf; font-size: 28.5px; }
.dlg-head .col { padding-left: 13px; }
.dlg-caret { width: 18px; height: 10px; align-self: flex-start; margin: 6px 346px 0 auto; }
.dlg-head .col.name { padding-left: 75px; }
.dlg-row { height: 76px; align-items: center; font-size: 28.5px; color: #dcdcdc; }
.dlg-row > div { padding-left: 15px; }
.dlg-row > .dlg-file { display: flex; align-items: center; padding-left: 53px; color: #f2f2f2; }
.dlg-py { width: 36px; height: 40px; margin-right: 5px; }
.dlg-row > .dlg-size { padding-right: 20px; text-align: right; }
.dlg-hscroll {
  margin: auto 0 5px 43px;
  width: 1641px;
  height: 28px;
  flex: none;
  background-color: #929292;
}

.dlg-foot {
  flex: 1;
  position: relative;
  display: grid;
  grid-template-columns: 465px 890px 29px 474px;
  grid-template-rows: 49px 64px;
  row-gap: 15px;
  align-content: start;
  padding-top: 77px;
  background-color: #383838;
  font-size: 28.5px;
}
.foot-label { align-self: center; text-align: right; padding-right: 11px; color: #eee; }
.combo {
  box-sizing: border-box;
  display: flex;
  align-items: center;
  justify-content: space-between;
  padding: 0 14px 0 2px;
  border: 1px solid #8a8a8a;
  border-bottom: 2px solid #c4c4c4;
}
.combo.type { grid-column: 4; }
.combo svg { width: 14px; height: 11px; margin-left: auto; color: #aaa; }
.foot-actions {
  grid-column: 4;
  display: flex;
  gap: 32px;
}
.btn {
  width: 220px;
  box-sizing: border-box;
  display: flex;
  align-items: center;
  justify-content: center;
  border: 2px solid #5a5a5a;
  border-bottom-color: #777;
  border-radius: 4px;
  color: #f0f0f0;
}
.btn.primary { border-color: #d0d0d0; }
.grip { position: absolute; right: 6px; bottom: 8px; width: 16px; height: 22px; }

.cursor {
  position: absolute;
  left: 1550px;
  top: 477px;
  width: 36px;
  height: 54px;
}
```
